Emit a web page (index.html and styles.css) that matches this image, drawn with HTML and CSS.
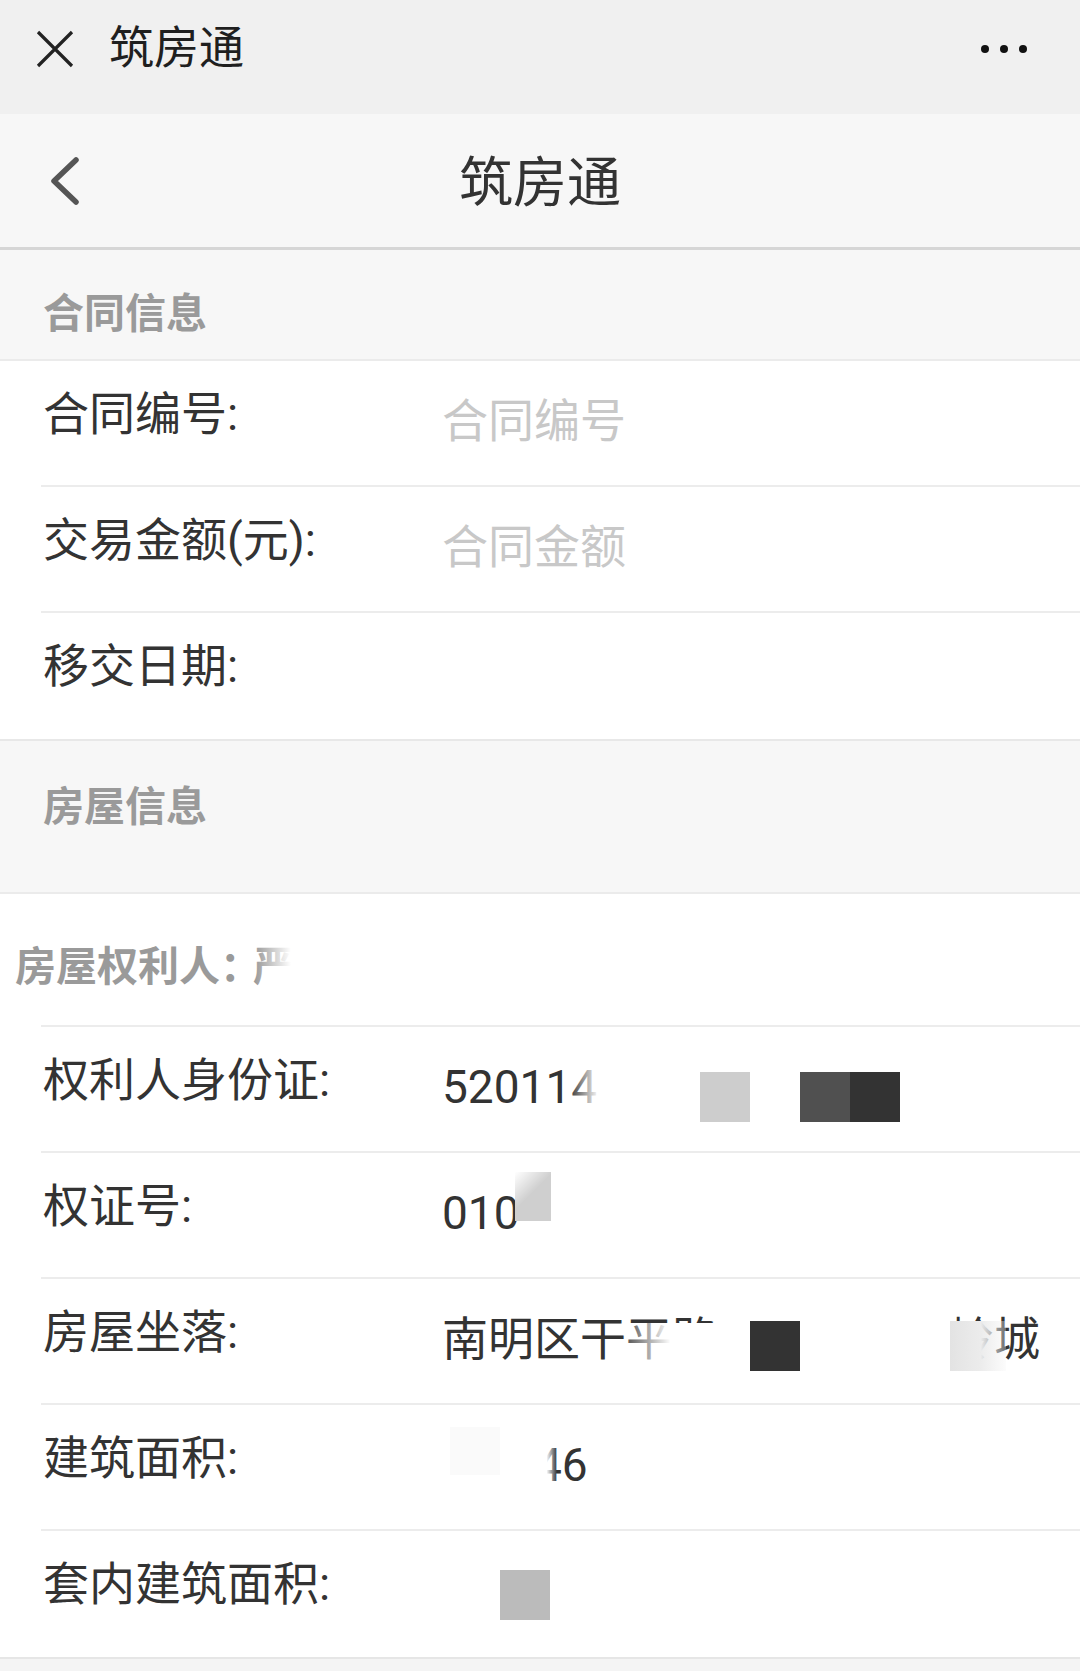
FILE: index.html
```html
<!DOCTYPE html>
<html lang="zh-CN">
<head>
  <meta charset="UTF-8" />
  <title>筑房通</title>
  <meta name="viewport" content="width=device-width, initial-scale=1.0"/>
  <link rel="stylesheet" href="styles.css">
</head>
<body>
  <div class="topbar">
    <svg class="close" width="38" height="38" viewBox="0 0 38 38">
      <path d="M2 2 L36 36 M36 2 L2 36" stroke="#222" stroke-width="3.2" fill="none"/>
    </svg>
    <span class="topbar-title">筑房通</span>
    <span class="more"><i></i><i></i><i></i></span>
  </div>

  <div class="navbar">
    <svg class="back" width="34" height="50" viewBox="0 0 34 50">
      <path d="M29 4 L7 25 L29 46" stroke="#555" stroke-width="5.5" stroke-linecap="round" stroke-linejoin="round" fill="none"/>
    </svg>
    <h1>筑房通</h1>
    <span></span>
  </div>

  <div class="page">
    <div class="section-title">合同信息</div>
    <div class="form">
      <div class="row">
        <label>合同编号:</label>
        <span class="value placeholder">合同编号</span>
      </div>
      <div class="row">
        <label>交易金额(元):</label>
        <span class="value placeholder">合同金额</span>
      </div>
      <div class="row">
        <label>移交日期:</label>
        <span class="value"></span>
      </div>
    </div>

    <div class="section-title tall">房屋信息</div>

    <div class="owner">
      房屋权利人<span class="colon">：</span>严
      <span class="mask owner-fade"></span>
    </div>

    <div class="form house">
      <div class="row">
        <label>权利人身份证:</label>
        <span class="value">520114</span>
        <span class="mask id-fade"></span>
        <span class="mask id-light"></span>
        <span class="mask id-mid"></span>
        <span class="mask id-dark"></span>
      </div>
      <div class="row">
        <label>权证号:</label>
        <span class="value">010</span>
        <span class="mask cert-block"></span>
      </div>
      <div class="row">
        <label>房屋坐落:</label>
        <span class="value">南明区干平路<span class="gap-addr"></span>岭城</span>
        <span class="mask addr-fade"></span>
        <span class="mask addr-dark"></span>
        <span class="mask addr-light"></span>
      </div>
      <div class="row">
        <label>建筑面积:</label>
        <span class="value"><span class="gap-area"></span>46</span>
        <span class="mask area-faint"></span>
        <span class="mask area-fade"></span>
      </div>
      <div class="row">
        <label>套内建筑面积:</label>
        <span class="value"></span>
        <span class="mask inner-block"></span>
      </div>
    </div>
  </div>
</body>
</html>
```

FILE: styles.css
```css
* {
  box-sizing: border-box;
}
body {
  margin: 0;
  background: #f4f4f4;
  font-family: Roboto, "Noto Sans CJK SC", sans-serif;
  color: #333;
}

/* barra do app */
.topbar {
  height: 114px;
  padding: 0 53px 16px 36px;
  background: #f0f0f0;
  display: flex;
  align-items: center;
}
.topbar-title {
  margin-left: 35px;
  font-size: 45px;
  color: #1f1f1f;
  line-height: 56px;
}
.more {
  margin-left: auto;
  display: flex;
  gap: 11px;
}
.more i {
  width: 8px;
  height: 8px;
  border-radius: 50%;
  background: #111;
}

/* cabecalho da pagina */
.navbar {
  height: 136px;
  background: #f7f7f7;
  border-bottom: 3px solid #d6d6d6;
  display: grid;
  grid-template-columns: 1fr auto 1fr;
  align-items: center;
}
.back {
  margin-left: 47px;
}
.navbar h1 {
  margin: 0;
  padding-top: 7px;
  font-size: 54px;
  font-weight: normal;
  line-height: 62px;
  color: #333;
}

.page {
  background: #fff;
}
.section-title {
  height: 111px;
  padding: 39px 0 0 43px;
  background: #f7f7f7;
  border-bottom: 2px solid #ebebeb;
  font-size: 41px;
  line-height: 50px;
  font-weight: bold;
  color: #9a9a9a;
}
.section-title.tall {
  height: 155px;
  padding-top: 41px;
  border-top: 2px solid #e8e8e8;
}

.row {
  position: relative;
  height: 126px;
  margin-left: 41px;
  border-bottom: 2px solid #ececec;
  display: flex;
  align-items: flex-start;
}
.form .row:last-child {
  border-bottom: none;
}
.form.house {
  border-bottom: 2px solid #e6e6e6;
}
.row label {
  width: 401px;
  flex-shrink: 0;
  margin-top: 25px;
  padding-left: 2px;
  font-size: 46px;
  line-height: 56px;
  color: #333;
}
.value {
  margin-top: 32px;
  font-size: 46px;
  line-height: 56px;
  color: #333;
  white-space: nowrap;
}
.placeholder {
  color: #c8c8c8;
}

.owner {
  position: relative;
  height: 133px;
  padding: 48px 0 0 15px;
  font-size: 41px;
  line-height: 50px;
  font-weight: bold;
  color: #9a9a9a;
  background: linear-gradient(#ececec, #ececec) 41px 100% / 100% 2px no-repeat;
}
.colon {
  letter-spacing: -8px;
}

.gap-addr {
  display: inline-block;
  width: 230px;
}
.gap-area {
  display: inline-block;
  width: 94px;
}

/* tarjas de ocultacao */
.mask {
  position: absolute;
}
.owner-fade {
  left: 255px;
  top: 40px;
  width: 80px;
  height: 64px;
  background: linear-gradient(to right, rgba(255,255,255,0) 0, #fff 45%);
}
.id-fade {
  left: 528px;
  top: 36px;
  width: 60px;
  height: 64px;
  background: linear-gradient(to right, rgba(255,255,255,0) 0, #fff 50%);
}
.id-light {
  left: 659px;
  top: 45px;
  width: 50px;
  height: 50px;
  background: #cdcdcd;
}
.id-mid {
  left: 759px;
  top: 45px;
  width: 50px;
  height: 50px;
  background: #505050;
}
.id-dark {
  left: 809px;
  top: 45px;
  width: 50px;
  height: 50px;
  background: #333;
}
.cert-block {
  left: 474px;
  top: 19px;
  width: 36px;
  height: 49px;
  background: linear-gradient(135deg, rgba(255,255,255,0.9) 0, #cfcfcf 45%);
}
.addr-fade {
  left: 587px;
  top: 44px;
  width: 122px;
  height: 56px;
  background: linear-gradient(to right, rgba(255,255,255,0.2) 0, #fff 35%);
}
.addr-dark {
  left: 709px;
  top: 42px;
  width: 50px;
  height: 50px;
  background: #333;
}
.addr-light {
  left: 909px;
  top: 42px;
  width: 56px;
  height: 50px;
  background: linear-gradient(to right, #e3e3e3 0, #ececec 55%, rgba(245,245,245,0.3) 100%);
}
.area-faint {
  left: 409px;
  top: 22px;
  width: 50px;
  height: 48px;
  background: #fafafa;
}
.area-fade {
  left: 486px;
  top: 34px;
  width: 30px;
  height: 60px;
  background: linear-gradient(to right, #fff 65%, rgba(255,255,255,0) 100%);
}
.inner-block {
  left: 459px;
  top: 39px;
  width: 50px;
  height: 50px;
  background: #bbb;
}
```
